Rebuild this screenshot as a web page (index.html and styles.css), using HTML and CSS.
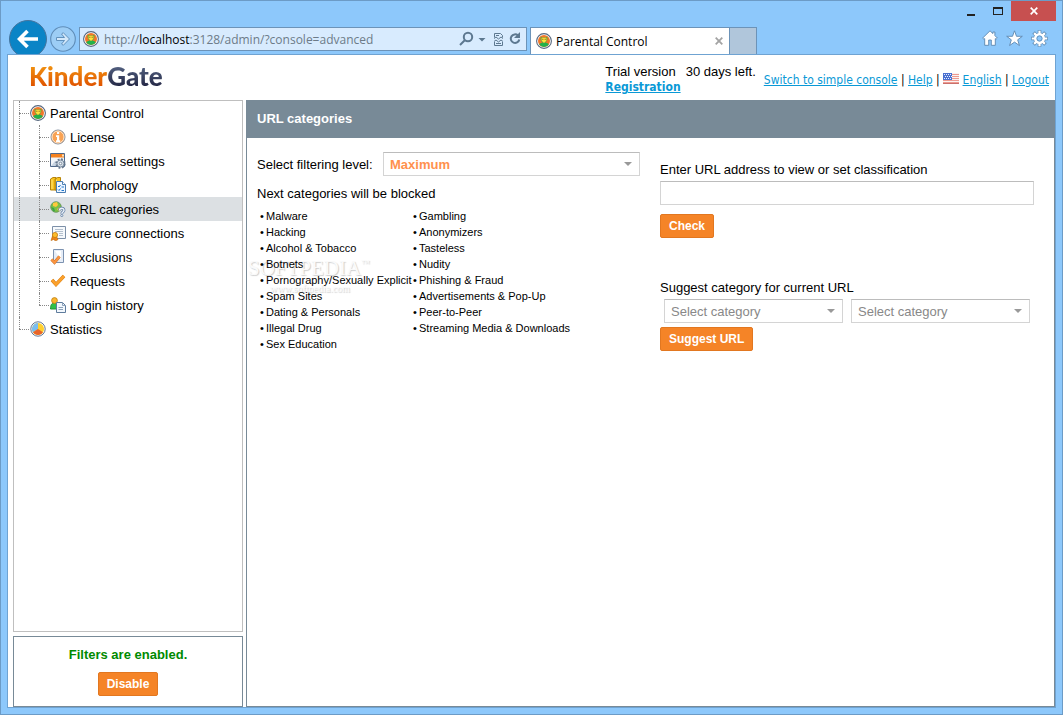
FILE: index.html
```html
<!DOCTYPE html>
<html lang="en">
<head>
    <meta charset="UTF-8">
    <meta name="viewport" content="width=device-width, initial-scale=1.0">
    <title>Parental Control</title>
    <link rel="stylesheet" href="styles.css">
</head>
<body>
    <svg class="sprite" aria-hidden="true">
        <symbol id="logo-icon" viewBox="0 0 16 16">
            <circle cx="8" cy="8" r="7.4" fill="#fff" stroke="#56677e" stroke-width="1.1"/>
            <circle cx="8" cy="8" r="6" fill="#f2762a"/>
            <path d="M3.200 11.600C4 10 6 9.500 8 9.500s4 .5 4.800 2.100A6 6 0 0 1 3.200 11.600z" fill="#22b14c"/>
            <path d="M4.600 3.400l1.600 1 3.600 0 1.600-1v3l-1.200 2.600L8 10.200 5.800 9 4.600 6.400z" fill="#5aa53a"/>
            <path d="M5.600 4.800h4.800v3L8 10 5.600 7.800z" fill="#ffe03c"/>
            <path d="M6.200 5.800h1.200v1H6.200zM8.600 5.800h1.200v1H8.600z" fill="#8a6418"/>
        </symbol>
    </svg>

    <div class="window">
        <div class="titlebar">
            <button class="win-btn" aria-label="Minimize">
                <svg width="10" height="10"><path d="M1 8h8v2H1z" fill="#222"/></svg>
            </button>
            <button class="win-btn" aria-label="Maximize">
                <svg width="10" height="8"><path d="M0 0h10v8H0zM1 2v5h8V2z" fill="#222" fill-rule="evenodd"/></svg>
            </button>
            <button class="win-btn close" aria-label="Close">
                <svg width="8" height="8"><path d="M.7.7l6.600 6.600M7.300.7L.7 7.300" stroke="#fff" stroke-width="1.7"/></svg>
            </button>
        </div>

        <div class="toolbar">
            <button class="back" aria-label="Back">
                <svg width="22" height="20" viewBox="0 0 22 20"><path d="M10.500 2L2.500 10l8 8M3 10h18" fill="none" stroke="#fff" stroke-width="3.600"/></svg>
            </button>
            <button class="forward" aria-label="Forward">
                <svg width="26" height="26" viewBox="0 0 26 26">
                    <circle cx="13" cy="13" r="12.300" fill="#9ccdf5" stroke="#5f8db8" stroke-width="1.100"/>
                    <path d="M6.500 11.500h8l-3-3.500 1.800-1.300L19.500 13l-6.200 6.300-1.800-1.300 3-3.500h-8z" fill="#d3e8fa" stroke="#6292bd"/>
                </svg>
            </button>
            <div class="address">
                <svg width="16" height="16"><use href="#logo-icon"/></svg>
                <span class="url">http://<b>localhost</b>:3128/admin/?console=advanced</span>
                <svg width="62" height="16" viewBox="0 0 62 16" fill="none" stroke="#5d7890" stroke-width="2">
                    <circle cx="9" cy="6" r="4.200"/>
                    <path d="M6 9L1 14"/>
                    <path d="M19.500 7h7L23 10.500z" fill="#5d7890" stroke="none"/>
                    <path d="M35.500 6.500V2.500h6l2 2v2M35.500 11v3.500h8V11" stroke-width="1"/>
                    <path d="M35 7.500L37 6l2.500 2L42 6l2 1.500M35 10.500L37 9l2.500 2L42 9l2 1.500M37 12.500h5M37 4.500h3" stroke-width="1"/>
                    <path d="M59 4.500a4.300 4.300 0 1 0 1.300 4"/>
                    <path d="M61 1v6h-6z" fill="#5d7890" stroke="none"/>
                </svg>
            </div>
            <div class="tab">
                <svg width="16" height="16"><use href="#logo-icon"/></svg>
                <span>Parental Control</span>
                <button class="tab-close" aria-label="Close tab">
                    <svg width="8" height="8"><path d="M.7.7l6.600 6.600M7.300.7L.7 7.300" stroke="#a3a3a3" stroke-width="1.800"/></svg>
                </button>
            </div>
            <button class="new-tab" aria-label="New tab"></button>
            <div class="tools">
                <svg width="16" height="16" viewBox="0 0 16 16"><path d="M8 .8L.7 8l1.200 1.200.8-.6v6.700h4V10h2.600v5.300h4V8.600l.8.6L15.300 8 12.900 5.600V2h-2v1.600z" fill="#fff" stroke="#5b87b0" stroke-width=".9"/></svg>
                <svg width="17" height="17" viewBox="0 0 17 17"><path d="M8.500 .8l2 5.500h5.800l-4.600 3.500 1.700 5.700-4.900-3.400-4.900 3.400 1.700-5.700L.7 6.300h5.800z" fill="#fff" stroke="#5b87b0" stroke-width=".9"/></svg>
                <svg width="17" height="17" viewBox="0 0 17 17" fill="none">
                    <g stroke="#5b87b0" stroke-width="3.600">
                        <path d="M8.500 .2v16.600M.2 8.500h16.600M2.600 2.600l11.800 11.800M14.400 2.600L2.600 14.400"/>
                        <circle cx="8.500" cy="8.500" r="4.300"/>
                    </g>
                    <path d="M8.500 .8v15.400M.8 8.500h15.400M3.100 3.100l10.800 10.800M13.900 3.100L3.100 13.900" stroke="#fff" stroke-width="2.200"/>
                    <circle cx="8.500" cy="8.500" r="4.200" fill="#8dc8fb" stroke="#fff" stroke-width="2.600"/>
                    <circle cx="8.500" cy="8.500" r="2.600" stroke="#5b87b0" stroke-width=".8"/>
                </svg>
            </div>
        </div>

        <div class="page">
            <header class="header">
                <div class="logo"><span class="kinder">Kinder</span><span class="gate">Gate</span></div>
                <div class="trial">
                    <div class="trial-text"><span>Trial version</span><span>30 days left.</span></div>
                    <a href="#">Registration</a>
                </div>
                <nav class="links">
                    <a href="#">Switch to simple console</a> |
                    <a href="#">Help</a> |
                    <svg width="16" height="11" viewBox="0 0 16 11">
                        <path d="M0 0h16v11H0z" fill="#faf3f2"/>
                        <path d="M0 1.500h16M0 3.500h16M0 5.500h16M0 7.500h16M0 9.500h16" stroke="#ee9a90" stroke-width="1"/>
                        <path d="M0 0h9v7H0z" fill="#4a70d0"/>
                        <path d="M1 1.500h8M2 3.500h7M1 5.500h8" stroke="#e6edff" stroke-dasharray="1 1"/>
                        <path d="M0 10.500h16" stroke="#c9706c"/>
                    </svg>
                    <a href="#">English</a> |
                    <a href="#">Logout</a>
                </nav>
            </header>

            <div class="columns">
                <aside class="sidebar">
                    <ul class="tree">
                        <li>
                            <a href="#"><svg width="16" height="16"><use href="#logo-icon"/></svg>Parental Control</a>
                            <ul>
                                <li><a href="#">
                                    <svg width="16" height="16" viewBox="0 0 16 16"><circle cx="8" cy="8" r="7" fill="#f9a253" stroke="#8291a3"/><circle cx="8" cy="8" r="6" fill="none" stroke="#ffe9d2"/><path d="M7 3h2.200v2H7zM6 6.300h3.200v5h1V13H6v-1.700h1V8H6z" fill="#fff"/></svg>License</a></li>
                                <li><a href="#">
                                    <svg width="16" height="16" viewBox="0 0 16 16"><path d="M.5.500h14v13H.5z" fill="#f3f6fa" stroke="#50698a"/><path d="M1 1h13v3.500H1z" fill="#f58220"/><path d="M12 1.500h2v2h-2z" fill="#ffe2b8"/><path d="M1 13l4-5 4 5z" fill="#c9d5e2"/><circle cx="10.500" cy="10.500" r="4.200" fill="none" stroke="#66788d" stroke-width="2" stroke-dasharray="1.800 1.500"/><circle cx="10.500" cy="10.500" r="3.500" fill="#d9e1ea" stroke="#66788d" stroke-width=".8"/><circle cx="10.500" cy="10.500" r="1.300" fill="#fff" stroke="#66788d" stroke-width=".8"/></svg>General settings</a></li>
                                <li><a href="#">
                                    <svg width="16" height="16" viewBox="0 0 16 16"><path d="M.5 2L3 .5h3V13H.5zM5 2L7.500.500h3V13H5z" fill="#f8c31c" stroke="#b88408"/><path d="M2 2.500V12M6.500 2.500V12" stroke="#ffe57a"/><path d="M6.500 4.500h6l3 3v8h-9z" fill="#eef6ff" stroke="#4d7fb2"/><path d="M12.500 4.500v3h3" fill="#fff" stroke="#4d7fb2"/><path d="M8 9l1 1 1.500-2M8 12.500l1 1 1.500-2M11.500 10H14M11.500 13.500H14" fill="none" stroke="#1c75cd"/></svg>Morphology</a></li>
                                <li class="active"><a href="#">
                                    <svg width="16" height="16" viewBox="0 0 16 16"><circle cx="6" cy="6" r="5.300" fill="#7cc043" stroke="#5f8f5d" stroke-width=".8"/><path d="M3 2l4-1 1 3-2 2-3-1zM7 8l3-2 1 2-2 2.500z" fill="#ffc83c"/><path d="M1 6l3 1 1 3-1.500.500z" fill="#38a34b"/><path d="M9.500 9.500c0-3 4.500-3 4.500-.3 0 1.800-2.200 1.700-2.200 3.500" fill="none" stroke="#5c7ba2" stroke-width="2.800"/><path d="M9.500 9.500c0-3 4.500-3 4.500-.3 0 1.800-2.200 1.700-2.200 3.500" fill="none" stroke="#edf3fa" stroke-width="1.400"/><circle cx="11.800" cy="14.500" r="1.100" fill="#edf3fa" stroke="#5c7ba2" stroke-width=".8"/></svg>URL categories</a></li>
                                <li><a href="#">
                                    <svg width="16" height="16" viewBox="0 0 16 16"><path d="M2.500 1.500h13v12h-13z" fill="#f6f9fc" stroke="#7d90a8"/><path d="M5 4.500h8M5 6.500h8M9 8.500h4M9 10.500h4" stroke="#b5c1ce"/><path d="M2.500 11L1 15.500l2.500-1 1.500 1L6.500 15.500l1.500-1-2-4z" fill="#f08416" stroke="#b9660c" stroke-width=".6"/><circle cx="5" cy="10" r="2.600" fill="#fbbc2c" stroke="#c77b0e" stroke-width=".8"/></svg>Secure connections</a></li>
                                <li><a href="#">
                                    <svg width="16" height="16" viewBox="0 0 16 16"><path d="M3.500.500h10v13h-10z" fill="#e6edf7" stroke="#7c92b0"/><path d="M5 2h6v9z" fill="#fff"/><path d="M1.500 10.500l3 3 5-6" fill="none" stroke="#c4702a" stroke-width="3"/><path d="M1.500 10.500l3 3 5-6" fill="none" stroke="#fb9440" stroke-width="2.200"/></svg>Exclusions</a></li>
                                <li><a href="#">
                                    <svg width="16" height="16" viewBox="0 0 16 16"><path d="M2 7l4 4.500L14 3" fill="none" stroke="#d27c16" stroke-width="3.500"/><path d="M2 7l4 4.500L14 3" fill="none" stroke="#fca12c" stroke-width="2.600"/></svg>Requests</a></li>
                                <li><a href="#">
                                    <svg width="16" height="16" viewBox="0 0 16 16"><path d="M.5 12c0-4 1-6 4-6s4 2 4 6z" fill="#2fc04a" stroke="#229436"/><circle cx="4.500" cy="3.500" r="2.900" fill="#fbb52c" stroke="#bf7d10" stroke-width=".8"/><path d="M6.500 5.500h6l3 3v7h-9z" fill="#f3f8fd" stroke="#5f7c9d"/><path d="M12.500 5.500v3h3M8.500 10.500H13M8.500 12.500H13" fill="none" stroke="#8ba1b9"/></svg>Login history</a></li>
                            </ul>
                        </li>
                        <li><a href="#">
                            <svg width="16" height="16" viewBox="0 0 16 16"><circle cx="8" cy="8" r="7.200" fill="#fff" stroke="#617692"/><circle cx="8" cy="8" r="6" fill="#ffd02e"/><path d="M8 8V2A6 6 0 0 0 3 11.300z" fill="#79bdf0"/><path d="M8 8l-5 3.300A6 6 0 0 0 13 11.300z" fill="#e8642a"/></svg>Statistics</a></li>
                    </ul>
                    <div class="filters">
                        <p>Filters are enabled.</p>
                        <button class="btn">Disable</button>
                    </div>
                </aside>

                <main class="main">
                    <h1>URL categories</h1>
                    <div class="content">
                        <section class="blocked">
                            <div class="level">
                                <label for="level">Select filtering level:</label>
                                <span class="select-box">
                                    <select id="level" class="maximum"><option>Maximum</option></select>
                                </span>
                            </div>
                            <h2>Next categories will be blocked</h2>
                            <div class="categories">
                                <div class="watermark">
                                    <span class="mark-name">SOFTPEDIA<sup>™</sup></span>
                                    <span class="mark-site">www.softpedia.com</span>
                                </div>
                                <ul>
                                    <li>Malware</li>
                                    <li>Hacking</li>
                                    <li>Alcohol &amp; Tobacco</li>
                                    <li>Botnets</li>
                                    <li>Pornography/Sexually Explicit</li>
                                    <li>Spam Sites</li>
                                    <li>Dating &amp; Personals</li>
                                    <li>Illegal Drug</li>
                                    <li>Sex Education</li>
                                </ul>
                                <ul>
                                    <li>Gambling</li>
                                    <li>Anonymizers</li>
                                    <li>Tasteless</li>
                                    <li>Nudity</li>
                                    <li>Phishing &amp; Fraud</li>
                                    <li>Advertisements &amp; Pop-Up</li>
                                    <li>Peer-to-Peer</li>
                                    <li>Streaming Media &amp; Downloads</li>
                                </ul>
                            </div>
                        </section>

                        <section class="classify">
                            <label for="url">Enter URL address to view or set classification</label>
                            <input type="text" id="url">
                            <button class="btn">Check</button>
                            <label class="suggest-label" for="category1">Suggest category for current URL</label>
                            <div class="suggest">
                                <span class="select-box">
                                    <select id="category1"><option>Select category</option></select>
                                </span>
                                <span class="select-box">
                                    <select id="category2" aria-label="Second category"><option>Select category</option></select>
                                </span>
                            </div>
                            <button class="btn">Suggest URL</button>
                        </section>
                    </div>
                </main>
            </div>
        </div>
    </div>
</body>
</html>
```
FILE: styles.css
```css
* {
    box-sizing: border-box;
}

body {
    margin: 0;
    font-family: "Liberation Sans", Arial, sans-serif;
    font-size: 13px;
    color: #000;
}

ul, p, h1, h2 {
    margin: 0;
    padding: 0;
    list-style: none;
}

svg {
    flex: none;
}

button {
    padding: 0;
    border: none;
    background: none;
    cursor: pointer;
}

a {
    color: #0a99d6;
}

.sprite {
    display: none;
}

/* Browser window */
.window {
    display: flex;
    flex-direction: column;
    min-height: 100vh;
    padding: 0 6px 6px;
    background: #8dc8fb;
    border: 1px solid #6c9bc6;
}

.titlebar {
    display: flex;
    justify-content: flex-end;
    height: 26px;
}

.win-btn {
    display: flex;
    align-items: center;
    justify-content: center;
    width: 27px;
    height: 20px;
}

.win-btn.close {
    width: 45px;
    background: #c75050;
}

.toolbar {
    display: flex;
    align-items: flex-start;
    height: 27px;
    padding: 0 8px 0 2px;
    font-family: "Open Sans", "Noto Sans", sans-serif;
    font-size: 12px;
}

.back {
    display: flex;
    align-items: center;
    justify-content: center;
    flex: none;
    width: 38px;
    height: 38px;
    margin-top: -7px;
    background: #0a84c6;
    border: 1px solid #44749e;
    border-radius: 50%;
}

.forward {
    height: 26px;
    margin: -1px 3px 0;
}

.address {
    display: flex;
    align-items: center;
    flex: 0 1 448px;
    height: 24px;
    padding: 0 5px 0 3px;
    gap: 5px;
    background: #d8ebfe;
    border: 1px solid #6c93b8;
    color: #6d7b88;
}

.url {
    flex: 1;
    white-space: nowrap;
    overflow: hidden;
}

.url b {
    font-weight: normal;
    color: #000;
}

.tab {
    display: flex;
    align-items: center;
    flex: 0 1 200px;
    height: 27px;
    margin-left: 3px;
    padding: 0 6px 0 5px;
    gap: 4px;
    background: #fff;
    border: 1px solid #6c93b8;
    border-bottom: none;
    white-space: nowrap;
}

.tab-close {
    display: flex;
    margin-left: auto;
}

.new-tab {
    width: 27px;
    height: 27px;
    background: #b0c6db;
    border: 1px solid #6c93b8;
    border-width: 1px 1px 0 0;
}

.tools {
    display: flex;
    align-items: center;
    gap: 8px;
    height: 22px;
    margin-left: auto;
}

/* Page */
.page {
    position: relative;
    display: flex;
    flex: 1;
    flex-direction: column;
    padding-left: 5px;
    background: #fff;
    border: 1px solid #6fa3d2;
}

.header {
    display: flex;
    height: 45px;
    padding: 0 6px 0 16px;
}

.logo {
    margin-top: 6px;
    font-family: Lato, sans-serif;
    font-size: 26px;
    font-weight: 900;
    line-height: 30px;
}

.kinder,
.gate {
    background: linear-gradient(#f09010 20%, #e05500 80%);
    background-clip: text;
    -webkit-background-clip: text;
    color: transparent;
}

.gate {
    background-image: linear-gradient(#526080 20%, #262a48 80%);
}

.trial {
    margin-left: auto;
    padding-top: 9px;
    line-height: 15px;
}

.trial-text {
    display: flex;
    gap: 10px;
}

.trial a {
    font-family: Tahoma, "DejaVu Sans Condensed", sans-serif;
    font-size: 12px;
    font-weight: bold;
}

.links {
    padding: 17px 0 0 8px;
    font-family: Tahoma, "DejaVu Sans Condensed", sans-serif;
    font-size: 12px;
    line-height: 16px;
    white-space: nowrap;
}

.columns {
    display: flex;
    flex: 1;
    gap: 3px;
}

.sidebar {
    display: flex;
    flex-direction: column;
    flex: 0 0 230px;
    gap: 4px;
}

/* Navigation tree */
.tree {
    flex: 1;
    border: 1px solid #bfbfbf;
}

.tree li {
    position: relative;
}

.tree a {
    display: flex;
    align-items: center;
    height: 24px;
    padding-left: 16px;
    gap: 4px;
    color: #000;
    text-decoration: none;
}

.tree ul a {
    padding-left: 36px;
}

.tree li::before {
    content: "";
    position: absolute;
    top: 0;
    bottom: 0;
    left: 5px;
    z-index: 1;
    border-left: 1px dotted #888;
}

.tree li::after {
    content: "";
    position: absolute;
    top: 12px;
    left: 5px;
    width: 10px;
    border-top: 1px dotted #888;
}

.tree ul li::before,
.tree ul li::after {
    left: 25px;
}

.tree li:last-child::before {
    bottom: auto;
    height: 12px;
}

.tree .active {
    background: #dce0e3;
}

.filters {
    height: 71px;
    padding-top: 10px;
    border: 1px solid #788a97;
    text-align: center;
}

.filters p {
    margin-bottom: 9px;
    font-weight: bold;
    line-height: 16px;
    color: #008a00;
}

.btn {
    height: 24px;
    padding: 0 8px;
    background: #f58427;
    border: 1px solid #e27720;
    border-radius: 2px;
    font: bold 12px "Liberation Sans", Arial, sans-serif;
    color: #fff;
}

/* Main panel */
.main {
    flex: 1;
    min-width: 0;
    border: 1px solid #788a97;
    border-top: none;
}

.main h1 {
    padding: 0 10px;
    background: #788a97;
    font-size: 13px;
    line-height: 38px;
    color: #fff;
}

.content {
    display: grid;
    grid-template-columns: 383px minmax(0, 1fr);
    gap: 20px;
    padding: 14px 20px 14px 10px;
}

.level {
    display: flex;
    align-items: center;
    justify-content: space-between;
}

.level .select-box {
    flex: 0 0 257px;
}

.select-box {
    position: relative;
}

.select-box::after {
    content: "";
    position: absolute;
    top: 10px;
    right: 8px;
    border: 4px solid transparent;
    border-top-color: #999;
    border-bottom: none;
    pointer-events: none;
}

select,
input {
    display: block;
    width: 100%;
    height: 24px;
    padding: 0 6px;
    appearance: none;
    background: #fff;
    border: 1px solid #d4d4d4;
    border-top-color: #bcbcbc;
    border-radius: 0;
    font: 13px "Liberation Sans", Arial, sans-serif;
    color: #888;
}

.maximum {
    font-weight: bold;
    color: #ff914d;
}

.blocked h2 {
    margin-top: 10px;
    font-size: 13px;
    font-weight: normal;
    line-height: 16px;
}

.categories {
    position: relative;
    display: flex;
    margin-top: 6px;
    padding-left: 3px;
    font-size: 11px;
    line-height: 16px;
}

.categories ul {
    position: relative;
}

.categories ul:first-of-type {
    flex: 0 0 153px;
}

.categories li {
    white-space: nowrap;
}

.categories li::before {
    content: "•";
    display: inline-block;
    width: 6px;
}

.watermark {
    position: absolute;
    top: 46px;
    left: -9px;
    display: flex;
    flex-direction: column;
    color: #fafafa;
    text-shadow: 1px 1px 1px rgba(0, 0, 0, 0.2);
    pointer-events: none;
}

.mark-name {
    font: 21px/28px "Liberation Serif", "Times New Roman", serif;
}

.mark-name sup {
    font-size: 9px;
    line-height: 9px;
    vertical-align: 9px;
}

.mark-site {
    padding-left: 22px;
    font: 10px/14px "Liberation Serif", "Times New Roman", serif;
}

.classify {
    padding-top: 10px;
}

.classify label {
    display: block;
    line-height: 16px;
}

.classify input {
    margin: 3px 0 9px;
}

.classify .suggest-label {
    margin-top: 42px;
}

.suggest {
    display: flex;
    gap: 8px;
    margin: 3px 4px 4px;
}

.suggest .select-box {
    flex: 1;
}
```
